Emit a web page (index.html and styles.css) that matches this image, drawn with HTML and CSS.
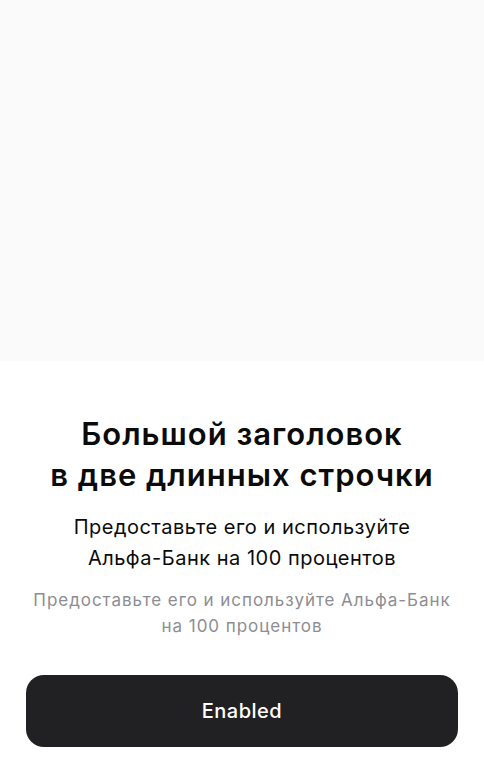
FILE: index.html
```html
<!DOCTYPE html>
<html lang="ru">
<head>
<meta charset="utf-8">
<link rel="stylesheet" href="styles.css">
</head>
<body>
<div class="page">
  <div class="hero"></div>
  <div class="content">
    <h1 class="title">Большой заголовок<br>в две длинных строчки</h1>
    <p class="subtitle">Предоставьте его и используйте<br>Альфа-Банк на 100 процентов</p>
    <p class="caption">Предоставьте его и используйте Альфа-Банк<br>на 100 процентов</p>
  </div>
  <div class="footer">
    <button class="btn">Enabled</button>
  </div>
</div>
</body>
</html>
```
FILE: styles.css
```css
* { box-sizing: border-box; }
html, body { margin: 0; padding: 0; background: #fff; }
body { font-family: Inter, "Noto Sans", sans-serif; color: #0b0b0c; }
.page { width: 484px; height: 768px; display: flex; flex-direction: column; }
.hero { height: 361px; background: #fafafa; flex: none; }
.content { padding: 52px 20px 0; text-align: center; flex: 1; }
.title { margin: 0; font-size: 31px; line-height: 41px; font-weight: 600; letter-spacing: 1px; }
.subtitle { margin: 17px 0 0; font-size: 20px; line-height: 31px; font-weight: 400; letter-spacing: 0.5px; }
.caption { margin: 13px 0 0; font-size: 17px; line-height: 26px; color: #8d8d93; letter-spacing: 0.95px; }
.footer { padding: 0 26px 21px; }
.btn { display: block; width: 100%; height: 72px; border: 0; border-radius: 18px; background: #212124; color: #fff; font-family: Inter, sans-serif; font-size: 20px; font-weight: 500; letter-spacing: 0.5px; }
```
